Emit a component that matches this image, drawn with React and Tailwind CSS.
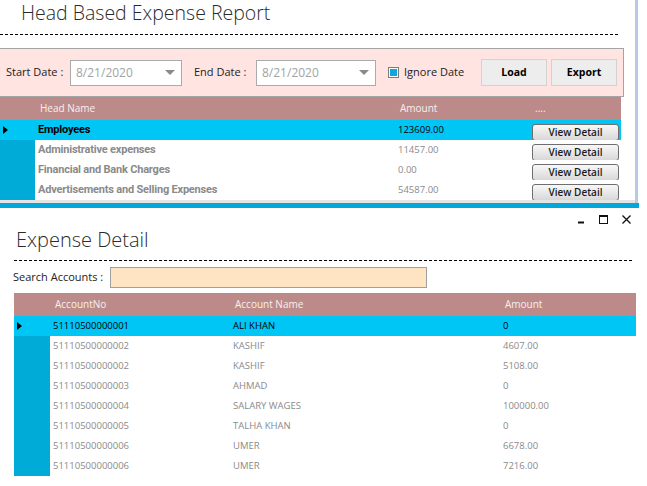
import React from "react";

const heads = [
  { name: "Employees", amount: "123609.00" },
  { name: "Administrative expenses", amount: "11457.00" },
  { name: "Financial and Bank Charges", amount: "0.00" },
  { name: "Advertisements and Selling Expenses", amount: "54587.00" },
];

const accounts = [
  { no: "51110500000001", name: "ALI KHAN", amount: "0" },
  { no: "51110500000002", name: "KASHIF", amount: "4607.00" },
  { no: "51110500000002", name: "KASHIF", amount: "5108.00" },
  { no: "51110500000003", name: "AHMAD", amount: "0" },
  { no: "51110500000004", name: "SALARY WAGES", amount: "100000.00" },
  { no: "51110500000005", name: "TALHA KHAN", amount: "0" },
  { no: "51110500000006", name: "UMER", amount: "6678.00" },
  { no: "51110500000006", name: "UMER", amount: "7216.00" },
];

const Arrow = () => (
  <svg width="5" height="8" viewBox="0 0 5 8">
    <polygon points="0,0 5,4 0,8" fill="#000" />
  </svg>
);

const Dashes = ({ className }) => (
  <div
    className={
      "h-px bg-[repeating-linear-gradient(90deg,#000_0_3px,transparent_3px_5px)] " +
      className
    }
  />
);

const DateBox = ({ width }) => (
  <div
    className={
      "h-[26px] bg-white border border-[#ababab] flex items-center justify-between pl-[5px] pr-[6px] " +
      width
    }
  >
    <span className="text-[12px] text-[#a3a3a3]">8/21/2020</span>
    <svg width="10" height="5" viewBox="0 0 10 5">
      <polygon points="0,0 10,0 5,5" fill="#8a8a8a" />
    </svg>
  </div>
);

export default function App() {
  return (
    <div className="w-[647px] h-[486px] bg-white overflow-hidden font-['Open_Sans',sans-serif] text-black">
      {/* top window */}
      <div className="w-[638px] h-[203px] border-r-[3px] border-[#b6cae6] flex flex-col">
        <div className="h-[34px] pl-[21px] text-[19.5px] font-light text-[#2a2a2a] leading-[25px]">
          Head Based Expense Report
        </div>
        <Dashes className="w-[618px]" />

        {/* filter panel */}
        <div className="mt-[13px] -ml-px w-[625px] h-[49px] border border-[#a4a4a4] bg-[#ffe4e1] flex items-center pl-[6px] pr-[6px]">
          <span className="w-[64px] text-[11px] text-[#222]">Start Date :</span>
          <DateBox width="w-[112px]" />
          <span className="ml-[12px] w-[62px] text-[11px] text-[#222]">End Date :</span>
          <DateBox width="w-[120px]" />
          <div className="ml-[12px] w-[11px] h-[11px] border border-[#7c7c7c] bg-white p-px">
            <div className="w-full h-full bg-[#0fa6dc]" />
          </div>
          <span className="ml-[5px] text-[11px] text-[#222]">Ignore Date</span>
          <button className="ml-auto w-[66px] h-[27px] bg-[#ededed] border border-[#d2d2d2] text-[10.5px] font-bold">
            Load
          </button>
          <button className="ml-[4px] w-[66px] h-[27px] bg-[#ededed] border border-[#d2d2d2] text-[10.5px] font-bold">
            Export
          </button>
        </div>

        {/* heads grid */}
        <div className="w-[621px] h-[23px] bg-[#bc8b89] flex items-center text-[10px] text-[#f6f0f0]">
          <div className="w-[35px]" />
          <div className="w-[360px] pl-[5px]">Head Name</div>
          <div className="w-[135px] pl-[5px]">Amount</div>
          <div className="pl-[5px]">....</div>
        </div>
        {heads.map((h, i) => {
          const sel = i === 0;
          return (
            <div
              key={i}
              className={
                "w-[621px] h-[20px] flex items-center " +
                (sel ? "bg-[#00c6f6]" : "bg-white")
              }
            >
              <div
                className={
                  "w-[35px] h-full flex items-center pl-[3px] " +
                  (sel ? "bg-[#00c6f6]" : "bg-[#00acd7]")
                }
              >
                {sel && <Arrow />}
              </div>
              <div
                className={
                  "w-[360px] pl-[3px] font-['Roboto',sans-serif] font-bold text-[11px] tracking-[-0.2px] " +
                  (sel ? "text-black" : "text-[#8a8a8a]")
                }
              >
                {h.name}
              </div>
              <div
                className={
                  "w-[135px] pl-[3px] text-[9.5px] " +
                  (sel ? "text-black" : "text-[#8a8a8a]")
                }
              >
                {h.amount}
              </div>
              <div className="pl-[2px]">
                <button className="w-[87px] h-[17px] rounded-[3px] border border-[#6e6e6e] bg-linear-to-b from-[#f8f8f8] to-[#d8d8d8] text-[10px] font-semibold text-[#1a1a1a] leading-none">
                  View Detail
                </button>
              </div>
            </div>
          );
        })}
        <div className="h-[3px] bg-[#e4e4e4]" />
      </div>
      <div className="w-[639px] h-[5px] bg-[#00a7d8]" />

      {/* bottom window */}
      <div className="w-[639px] flex flex-col">
        <div className="h-[20px] flex items-start justify-end pt-[7px] pr-[8px]">
          <svg width="9" height="9" viewBox="0 0 9 9">
            <rect x="1" y="6.5" width="6" height="2" fill="#111" />
          </svg>
          <svg width="9" height="9" viewBox="0 0 9 9" className="ml-[13px]">
            <rect x="0.5" y="0.5" width="8" height="8" fill="none" stroke="#111" />
            <rect x="0" y="0" width="9" height="2" fill="#111" />
          </svg>
          <svg width="9" height="9" viewBox="0 0 9 9" className="ml-[14px]">
            <path d="M0.5 0.5 L8.5 8.5 M8.5 0.5 L0.5 8.5" stroke="#111" strokeWidth="1.3" />
          </svg>
        </div>
        <div className="h-[32px] pl-[16px] text-[20px] font-light text-[#2a2a2a] leading-[24px]">
          Expense Detail
        </div>
        <Dashes className="ml-[14px] w-[619px]" />

        <div className="mt-[6px] h-[21px] flex items-center pl-[13px]">
          <span className="w-[97px] text-[11px] text-[#222]">Search Accounts :</span>
          <div className="w-[317px] h-[21px] bg-[#ffe4c4] border border-[#a0a0a0]" />
        </div>

        {/* accounts grid */}
        <div className="mt-[5px] ml-[14px] w-[622px] flex flex-col">
          <div className="h-[23px] bg-[#bc8b89] flex items-center text-[10px] text-[#f6f0f0]">
            <div className="w-[36px]" />
            <div className="w-[180px] pl-[5px]">AccountNo</div>
            <div className="w-[270px] pl-[5px]">Account Name</div>
            <div className="pl-[5px]">Amount</div>
          </div>
          {accounts.map((a, i) => {
            const sel = i === 0;
            const tc = sel ? "text-black" : "text-[#8a8a8a]";
            return (
              <div
                key={i}
                className={
                  "h-[20px] flex items-center text-[9.5px] " +
                  (sel ? "bg-[#00c6f6]" : "bg-white")
                }
              >
                <div
                  className={
                    "w-[36px] h-full flex items-center pl-[3px] " +
                    (sel ? "bg-[#00c6f6]" : "bg-[#00acd7]")
                  }
                >
                  {sel && <Arrow />}
                </div>
                <div className={"w-[180px] pl-[3px] " + tc}>{a.no}</div>
                <div className={"w-[270px] pl-[3px] " + tc}>{a.name}</div>
                <div className={"pl-[3px] " + tc}>{a.amount}</div>
              </div>
            );
          })}
        </div>
      </div>
    </div>
  );
}
